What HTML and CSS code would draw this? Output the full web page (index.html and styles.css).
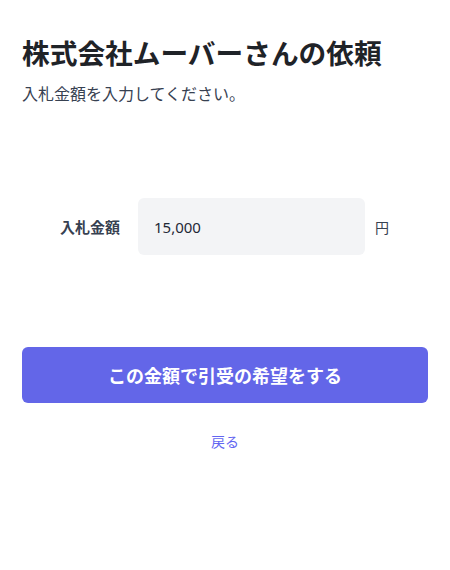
FILE: index.html
```html
<!DOCTYPE html>
<html lang="ja">

<head>
    <meta charset="UTF-8">
    <meta name="viewport" content="width=device-width, initial-scale=1.0">
    <title>入札</title>
    <link rel="stylesheet" href="styles.css">
</head>

<body>
    <!-- 見出し -->
    <header class="page-head">
        <h1>株式会社ムーバーさんの依頼</h1>
        <p>入札金額を入力してください。</p>
    </header>

    <!-- 入札フォーム -->
    <form class="bid-form">
        <div class="bid-row">
            <label for="amount">入札金額</label>
            <input id="amount" class="bid-input" type="text" value="15,000">
            <span class="unit">円</span>
        </div>
        <button type="button" class="botao">この金額で引受の希望をする</button>
        <a href="#" class="back">戻る</a>
    </form>
</body>

</html>
```

FILE: styles.css
```css
/* 全体 */
body {
    font-family: "Noto Sans CJK JP", "Noto Sans", sans-serif;
    margin: 0;
    padding: 0 22px;
    background-color: #fff;
    color: #1f2937;
}

/* 見出し */
.page-head {
    padding-top: 32px;
}

.page-head h1 {
    margin: 0;
    font-size: 27.7px;
    font-weight: bold;
    line-height: 40px;
    color: #1f2328;
}

.page-head p {
    margin: 10px 0 0;
    font-size: 16px;
    line-height: 22px;
    color: #374151;
}

/* フォーム */
.bid-form {
    display: flex;
    flex-direction: column;
    margin-top: 94px;
}

.bid-row {
    display: flex;
    align-items: center;
    padding-left: 38px;
}

.bid-row label {
    width: 78px;
    font-size: 15px;
    font-weight: bold;
    color: #374151;
}

.bid-input {
    width: 227px;
    height: 57px;
    box-sizing: border-box;
    padding: 0 16px;
    border: none;
    border-radius: 6px;
    background-color: #f3f4f6;
    font-family: "Noto Sans", sans-serif;
    font-size: 15px;
    color: #1f2937;
}

.unit {
    margin-left: 10px;
    font-size: 14px;
    color: #374151;
}

.botao {
    margin-top: 92px;
    height: 56px;
    border: none;
    border-radius: 6px;
    background-color: #6366e8;
    color: white;
    font-family: "Noto Sans CJK JP", sans-serif;
    font-size: 18px;
    font-weight: bold;
}

.back {
    align-self: center;
    margin-top: 28px;
    font-size: 14px;
    color: #6366f1;
    text-decoration: none;
}
```
